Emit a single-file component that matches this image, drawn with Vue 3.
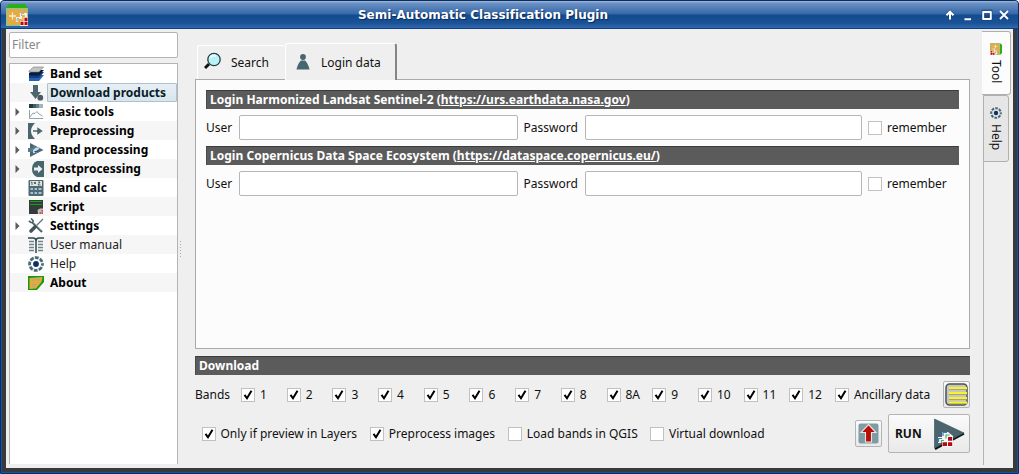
<script setup>
const items = [
  { t: 'Band set', i: 'bandset', b: true },
  { t: 'Download products', i: 'download', b: true, sel: true },
  { t: 'Basic tools', i: 'basic', b: true, a: true },
  { t: 'Preprocessing', i: 'pre', b: true, a: true },
  { t: 'Band processing', i: 'proc', b: true, a: true },
  { t: 'Postprocessing', i: 'post', b: true, a: true },
  { t: 'Band calc', i: 'calc', b: true },
  { t: 'Script', i: 'script', b: true },
  { t: 'Settings', i: 'settings', b: true, a: true },
  { t: 'User manual', i: 'manual' },
  { t: 'Help', i: 'help' },
  { t: 'About', i: 'about', b: true },
]
const logins = [
  { t: 'Login Harmonized Landsat Sentinel-2 (', u: 'https://urs.earthdata.nasa.gov' },
  { t: 'Login Copernicus Data Space Ecosystem (', u: 'https://dataspace.copernicus.eu/' },
]
const bands = ['1', '2', '3', '4', '5', '6', '7', '8', '8A', '9', '10', '11', '12', 'Ancillary data']
const options = [
  { t: 'Only if preview in Layers', c: true, k: 'o1' },
  { t: 'Preprocess images', c: true, k: 'o2' },
  { t: 'Load bands in QGIS', c: false, k: 'o3' },
  { t: 'Virtual download', c: false, k: 'o4' },
]
</script>

<template>
  <div class="window">
    <svg class="defs" width="0" height="0">
      <symbol id="logo" viewBox="0 0 22 22">
        <path d="M0 4 3 0H19L22 4Z" fill="#2cae1c" />
        <rect y="4" width="22" height="18" fill="#e6aa43" />
        <path d="M.7 4.700H21.300V21.300H.7Z" fill="none" stroke="#4bd9c0" stroke-width="1.200" stroke-dasharray="3 2" />
        <path d="M3 12H10M6.500 8.500V15.500" stroke="#f8ecd2" stroke-width="1.300" />
        <path d="M11 18V14H15V10H20V14" fill="none" stroke="#f4efe8" stroke-width="2.200" />
        <path d="M11 17.500V14.500H13M15.500 12V9.500H18" fill="none" stroke="#7fa6b8" stroke-width=".8" />
        <path d="M14 17H17.500V13H22V22H14Z" fill="#f6e8d8" />
        <path d="M14.500 17.800H17.500V21H14.500ZM18.500 17.800H21.500V21H18.500ZM18.500 13.800H21.500V17H18.500Z" fill="#b50a12" />
      </symbol>
      <symbol id="bandset" viewBox="0 0 16 16">
        <path d="M1 12 6 9H16L11 15H1Z" fill="#2763b5" />
        <path d="M1 9 6 6H16L11 12H1Z" fill="#153d7b" />
        <path d="M1 7 6 4H16L11 9.500H1Z" fill="#071c40" />
        <path d="M1 5 5.500 1H15.500L11 6H1Z" fill="#c4c4c2" stroke="#727779" stroke-width=".6" />
      </symbol>
      <symbol id="download" viewBox="0 0 16 16">
        <path d="M5 0H10V7H13L7.500 14 2 7H5Z" fill="#4c666e" />
        <circle cx="12.300" cy="12.700" r="2.900" fill="#4c5962" />
      </symbol>
      <symbol id="basic" viewBox="0 0 16 16">
        <path d="M1 0H5V4H1Z" fill="#203b42" /><path d="M5 0H8V4H5Z" fill="#3d6167" />
        <path d="M8 0H11V4H8Z" fill="#648188" /><path d="M11 0H15V4H11Z" fill="#a1b5bb" />
        <path d="M1.500 6V14.500H15M2 13 5 9 7 9.500 9 7.500 11 10 14.500 12" fill="none" stroke="#829aa1" stroke-width=".9" />
      </symbol>
      <symbol id="pre" viewBox="0 0 16 16">
        <path d="M0 0H7Q-1 8 7 16H0Z" fill="#4a666d" />
        <path d="M5 8H10M10 5.500 13.500 8 10 10.500Z" fill="#4a666d" stroke="#4a666d" stroke-width="1.400" />
      </symbol>
      <symbol id="proc" viewBox="0 0 16 16">
        <path d="M2 1 15.500 8 2 15Z" fill="#4c686f" />
        <path d="M0 6H5V3L11 8 5 13V10H0Z" fill="#5d7983" />
        <path d="M5 8 8 5.500H12L9 9V11H5Z" fill="#c5dcef" /><path d="M6 9.500 11 8 8 11Z" fill="#174d97" />
      </symbol>
      <symbol id="post" viewBox="0 0 16 16">
        <path d="M16 0H9Q4 2 4 8T9 16H16Z" fill="#4a666d" />
        <path d="M6 6.500H10V4L14.500 8 10 12V9.500H6Z" fill="#edf1f2" />
      </symbol>
      <symbol id="calc" viewBox="0 0 16 16">
        <rect x=".5" width="15" height="16" rx="1" fill="#4d6971" />
        <rect x="2" y="1" width="12" height="5" fill="#e0e3df" />
        <path d="M3 2.500 4 2V5M6 2 8 4M8 2 6 4M10 2H12L10 5H12.500" fill="none" stroke="#34484e" stroke-width=".8" />
        <path d="M2.500 8H5V10H2.500ZM6.500 8H9V10H6.500ZM10.500 8H13.500V10H10.500ZM2.500 12H5V14H2.500ZM6.500 12H9V14H6.500ZM10.500 12H13.500V14H10.500Z" fill="#aabfd6" />
      </symbol>
      <symbol id="script" viewBox="0 0 16 16">
        <path d="M1 1H15V12L12 15H1Z" fill="#343a3c" />
        <path d="M2 2.500H14M2 5.500H14" stroke="#11a411" stroke-width="1" />
        <path d="M9.500 11 12 9.500H15V15H10Z" fill="#bcbcb8" /><path d="M11.500 13.200H13V15H11.500ZM13.500 13.200H15V15H13.500ZM13.500 11H15V12.700H13.500Z" fill="#cf484c" />
      </symbol>
      <symbol id="settings" viewBox="0 0 16 16">
        <path d="M4 4 14 14" stroke="#4b666f" stroke-width="2.200" />
        <path d="M3 .5 5 2.500V4.500H3L.8 3" fill="none" stroke="#4b666f" stroke-width="1.700" />
        <path d="M15 1 9 7" stroke="#64757c" stroke-width="1.300" /><path d="M7.500 8.500 3 13" stroke="#46545a" stroke-width="3.600" stroke-linecap="round" />
        <path d="M5 4 13 12" stroke="#bac8ca" stroke-width=".5" />
      </symbol>
      <symbol id="manual" viewBox="0 0 16 16">
        <path d="M0 1H5Q8 1 8 4 8 1 11 1H16M8 3V16" fill="none" stroke="#2f464f" stroke-width="1.500" />
        <path d="M1 4.500H6M1 7.500H6M1 10.500H6M1 13.500H6M10 4.500H15M10 7.500H15M10 10.500H15M10 13.500H15" stroke="#71848a" stroke-width="1.500" />
      </symbol>
      <symbol id="help" viewBox="0 0 16 16">
        <circle cx="8" cy="8" r="6.400" fill="none" stroke="#e6ecee" stroke-width="3" />
        <circle cx="8" cy="8" r="6.400" fill="none" stroke="#4a6972" stroke-width="2.800" stroke-dasharray="3.600 1.426" stroke-dashoffset="1.800" />
        <circle cx="8" cy="8" r="2.900" fill="#0c3263" />
      </symbol>
      <symbol id="about" viewBox="0 0 16 16">
        <path d="M0 1H16V7L9 15H0Z" fill="#169810" /><path d="M1.500 3 14.500 2 13.500 7 8 13.500 1.500 14Z" fill="#e1aa45" />
        <path d="M4 5.500 7 4.500 10 5 12 4.500M4 9.500H8M5 11.500H7" stroke="#a6aa76" stroke-width="1" fill="none" />
      </symbol>
    </svg>

    <header class="title">
      <svg class="app-logo"><use href="#logo" /></svg>
      <span class="title-text">Semi-Automatic Classification Plugin</span>
      <svg class="controls" width="64" height="14" viewBox="0 0 64 14">
        <g fill="none" stroke="#173d78" stroke-width="4"><path d="M5 11V5M2 7 5 4 8 7M20 11H26M38.500 3.500H45.500V10.500H38.500ZM55.500 3.500 62.500 10.500M62.500 3.500 55.500 10.500" opacity=".55" /></g>
        <path d="M5 11.500V4M1.500 7.200 5 3.700 8.500 7.200M19.500 11.200H26" stroke="#fff" stroke-width="2" fill="none" />
        <path d="M37.500 4H46.500M37.500 11H46.500" stroke="#fff" stroke-width="1.800" /><path d="M38.200 4V11M45.800 4V11M55 3 63 11M63 3 55 11" stroke="#fff" stroke-width="1.900" />
      </svg>
    </header>

    <div class="body">
      <aside class="side">
        <div class="filter">Filter</div>
        <div class="tree">
          <div v-for="r in items" :key="r.t" class="row">
            <span class="arrow"><svg v-if="r.a" width="5" height="8"><path d="M.5 0 4.500 4 .5 8Z" fill="#5b5b5b" /></svg></span>
            <svg class="icon"><use :href="'#' + r.i" /></svg>
            <span class="label" :class="{ bold: r.b, selected: r.sel }">{{ r.t }}</span>
          </div>
        </div>
      </aside>
      <div class="splitter"><i v-for="n in 6" :key="n"></i></div>

      <main class="main">
        <div class="tabs">
          <div class="tab search">
            <svg width="18" height="18" viewBox="0 0 18 18"><path d="M5 12 1 16" stroke="#101010" stroke-width="3" /><circle cx="10" cy="7.500" r="6.200" fill="#b9f2f6" stroke="#223b40" stroke-width="1.300" /><path d="M6 6Q8 2 12 4" stroke="#e5ffff" stroke-width="2" fill="none" /></svg>
            <span>Search</span>
          </div>
          <div class="tab login">
            <svg width="14" height="16" viewBox="0 0 14 16"><circle cx="7" cy="3" r="2.900" fill="#47666e" /><path d="M5 6.500H9Q12 9 13.500 15.500H.5Q2 9 5 6.500Z" fill="#47666e" /></svg>
            <span>Login data</span>
          </div>
        </div>
        <section class="panel">
          <template v-for="l in logins" :key="l.u">
            <div class="bar">{{ l.t }}<u>{{ l.u }}</u>)</div>
            <div class="form">
              <span class="user">User</span><div class="input in1"></div>
              <span class="pass">Password</span><div class="input in2"></div>
              <span class="check"></span><span class="lbl">remember</span>
            </div>
          </template>
        </section>
        <div class="bar dl">Download</div>
        <div class="bands">
          <span class="bands-label">Bands</span>
          <div class="band-grid">
            <div v-for="b in bands" :key="b" class="opt">
              <span class="check"><svg width="12" height="12"><path d="M2.500 5.800 5 9.300 9.500 1.800" fill="none" stroke="#000" stroke-width="2" /></svg></span><span class="lbl">{{ b }}</span>
            </div>
          </div>
          <div class="btn square">
            <svg width="23" height="23" viewBox="0 0 23 23"><rect x="1" y="1" width="21" height="21" rx="3.500" fill="#c6c6c4" stroke="#48535a" stroke-width="1.500" /><path d="M4 5.500H22M4 10.500H22M4 15.500H22M4 20H22" stroke="#9a9a6a" stroke-width="2.600" /><path d="M4 5H22M4 10H22M4 15H22M4 19.500H22" stroke="#f8f32b" stroke-width="2" /></svg>
          </div>
        </div>
        <div class="bottom">
          <div v-for="o in options" :key="o.k" class="opt" :class="o.k">
            <span class="check"><svg v-if="o.c" width="12" height="12"><path d="M2.500 5.800 5 9.300 9.500 1.800" fill="none" stroke="#000" stroke-width="2" /></svg></span><span class="lbl">{{ o.t }}</span>
          </div>
          <div class="btn square export">
            <svg width="21" height="21" viewBox="0 0 21 21"><rect x=".5" y=".5" width="20" height="20" rx="2" fill="#7c9da5" /><path d="M10.500 1.500 18 9.500H13.500V19H7.500V9.500H3Z" fill="#b80f08" stroke="#eee5df" stroke-width="1.100" /></svg>
          </div>
          <div class="btn run"><b>RUN</b>
            <svg width="31" height="32" viewBox="0 0 31 32"><path d="M1 31 30 15.500" stroke="#111" stroke-width="2" /><path d="M.5 1 30 15 .5 30Z" fill="#4a656d" stroke="#344c53" stroke-width=".6" />
              <path d="M4 19H8V14H14L19 18V28H8V25H4Z" fill="#f4f7f8" />
              <path d="M4.500 24V20.500H8M9 18V14.500H13" stroke="#397bb4" stroke-width="1.200" fill="none" /><path d="M7.500 25V22.500H10M12 20.500V17H15.500" stroke="#59a86a" stroke-width="1.200" fill="none" />
              <path d="M8 23.500H13.500V18.500H19V28.500H8Z" fill="#fff" /><path d="M8.500 24.200H13V28H8.500ZM14 24.200H18.200V28H14ZM14 19H18.200V22.800H14Z" fill="#b50a12" />
            </svg>
          </div>
        </div>
      </main>

      <nav class="dock">
        <div class="vtab tool"><svg class="rot" width="12" height="12"><use href="#logo" /></svg><span>Tool</span></div>
        <div class="vtab help"><svg width="12" height="12"><use href="#help" /></svg><span>Help</span></div>
        <div class="rule"></div>
      </nav>
    </div>
  </div>
</template>

<style>
body { margin: 0; background: #fff; overflow: hidden; }
</style>
<style scoped>
* { box-sizing: border-box; }
svg { display: block; flex: none; }
.window { position: relative; width: 1019px; height: 474px; display: flex; flex-direction: column; border: 1px solid #0a2d60; border-radius: 4px 4px 0 0; background: #1552a1; font: 12px/19px "Noto Sans", sans-serif; color: #111; overflow: hidden; }
.defs { position: absolute; }
.title { flex: none; height: 28px; display: flex; align-items: center; background: linear-gradient(#a5bddd 0, #6c92c5 2px, #3567a8 13px, #134b8f 14px, #1a5296 22px, #3268ae 27px, #0b3e83 27px); }
.app-logo { width: 22px; height: 22px; margin-left: 5px; }
.title-text { width: 600px; margin-left: 155px; text-align: center; color: #fff; font: bold 12px/20px "DejaVu Sans", sans-serif; letter-spacing: .02px; text-shadow: 1px 1px 1px #0b2959; white-space: nowrap; }
.controls { margin-left: 162px; }
.body { flex: 1; display: flex; margin: 0 1px 1px; border: solid #383a3c; border-width: 0 4px 4px; background: #efefef; min-height: 0; }
.side { width: 172px; padding-left: 3px; flex: none; }
.filter { height: 26px; margin: 3px 0 5px; border: 1px solid #b3b3b3; border-radius: 2px; background: #fff; padding-left: 2px; line-height: 24px; color: #888; }
.tree { height: 401px; border: 1px solid #b3b3b3; border-bottom: 0; background: #fff; }
.row { height: 19px; display: flex; align-items: center; }
.row:nth-child(even) { background: #f6f6f6; }
.arrow { width: 18px; padding-left: 5px; }
.icon { width: 16px; height: 16px; }
.label { height: 19px; flex: 1; margin-left: 3px; padding-left: 2px; border: 1px solid transparent; line-height: 17px; white-space: nowrap; color: #222; }
.bold { font-weight: bold; color: #000; }
.selected { background: linear-gradient(#e6eff5, #d8e5ed); border-color: #adc1ce; border-radius: 1px; color: #0b1d28; }
.splitter { width: 17px; padding: 212px 0 0 2px; flex: none; }
.splitter i { display: block; width: 1px; height: 1px; background: #aaa; margin-bottom: 2px; }
.main { width: 775px; flex: none; display: flex; flex-direction: column; }
.tabs { height: 50px; display: flex; align-items: flex-end; padding-left: 2px; }
.tab { display: flex; align-items: center; border: 1px solid #fff; border-bottom: 0; border-radius: 3px 3px 0 0; }
.search { width: 88px; height: 34px; padding-left: 6px; gap: 9px; border-right: 0; }
.search svg { margin-top: -3px; }
.login { width: 112px; height: 37px; margin-bottom: -1px; background: #efefef; position: relative; padding-left: 10px; gap: 11px; border-right: 2px solid #858585; }
.login svg { margin-top: -1px; }
.panel { height: 270px; border: 1px solid #aaa; background: #fcfcfc; padding: 10px; }
.bar { height: 19px; border: 1px solid #5b5b5b; border-top-color: #3c3c3c; border-left-color: #4a4a4a; background: #5b5b5b; color: #fff; font-weight: bold; line-height: 17px; padding-left: 3px; white-space: nowrap; letter-spacing: .02px; }
.form { height: 37px; display: flex; align-items: center; }
.user { width: 33px; }
.input { height: 25px; border: 1px solid #b6b6b6; border-radius: 2px; background: #fff; }
.in1 { width: 279px; }
.pass { width: 67px; padding-left: 5.500px; }
.in2 { width: 277px; margin-right: 6px; }
.check { width: 14px; height: 14px; flex: none; border: 1px solid #c1c1c1; background: #fff; }
.lbl { margin-left: 5px; white-space: nowrap; }
.dl { margin-top: 7px; }
.bands { height: 39px; display: flex; align-items: center; }
.bands-label { width: 46px; }
.band-grid { width: 702px; display: grid; grid-template-columns: repeat(14, 45.700px); }
.opt { display: flex; align-items: center; }
.btn { display: flex; align-items: center; justify-content: center; border: 1px solid #b4b4b4; border-radius: 2px; background: linear-gradient(#fafafa, #e9e9e9); }
.square { width: 27px; height: 27px; }
.bottom { height: 39px; display: flex; align-items: center; padding-left: 6.500px; }
.o1 { width: 168.300px; } .o2 { width: 138px; } .o3 { width: 142.200px; } .o4 { width: 205px; }
.run { width: 82px; height: 39px; margin-left: 6px; justify-content: space-between; padding: 0 4px 0 6px; }
.dock { width: 31px; margin-left: 12px; display: flex; flex-direction: column; align-items: flex-start; padding-top: 2px; }
.vtab { writing-mode: vertical-rl; display: flex; align-items: center; border: 1px solid #b0b0b0; }
.tool { width: 29px; height: 64px; border-left: 0; background: #fcfcfc; border-radius: 0 3px 3px 0; padding-top: 11px; gap: 5px; }
.help { width: 26px; height: 67px; margin-left: 1px; background: #e6e6e6; border-radius: 0 3px 3px 0; padding-top: 11px; gap: 5px; }
.rot { transform: rotate(90deg); }
.rule { width: 1px; height: 303px; margin-left: 1px; background: #b4b4b4; }
</style>
